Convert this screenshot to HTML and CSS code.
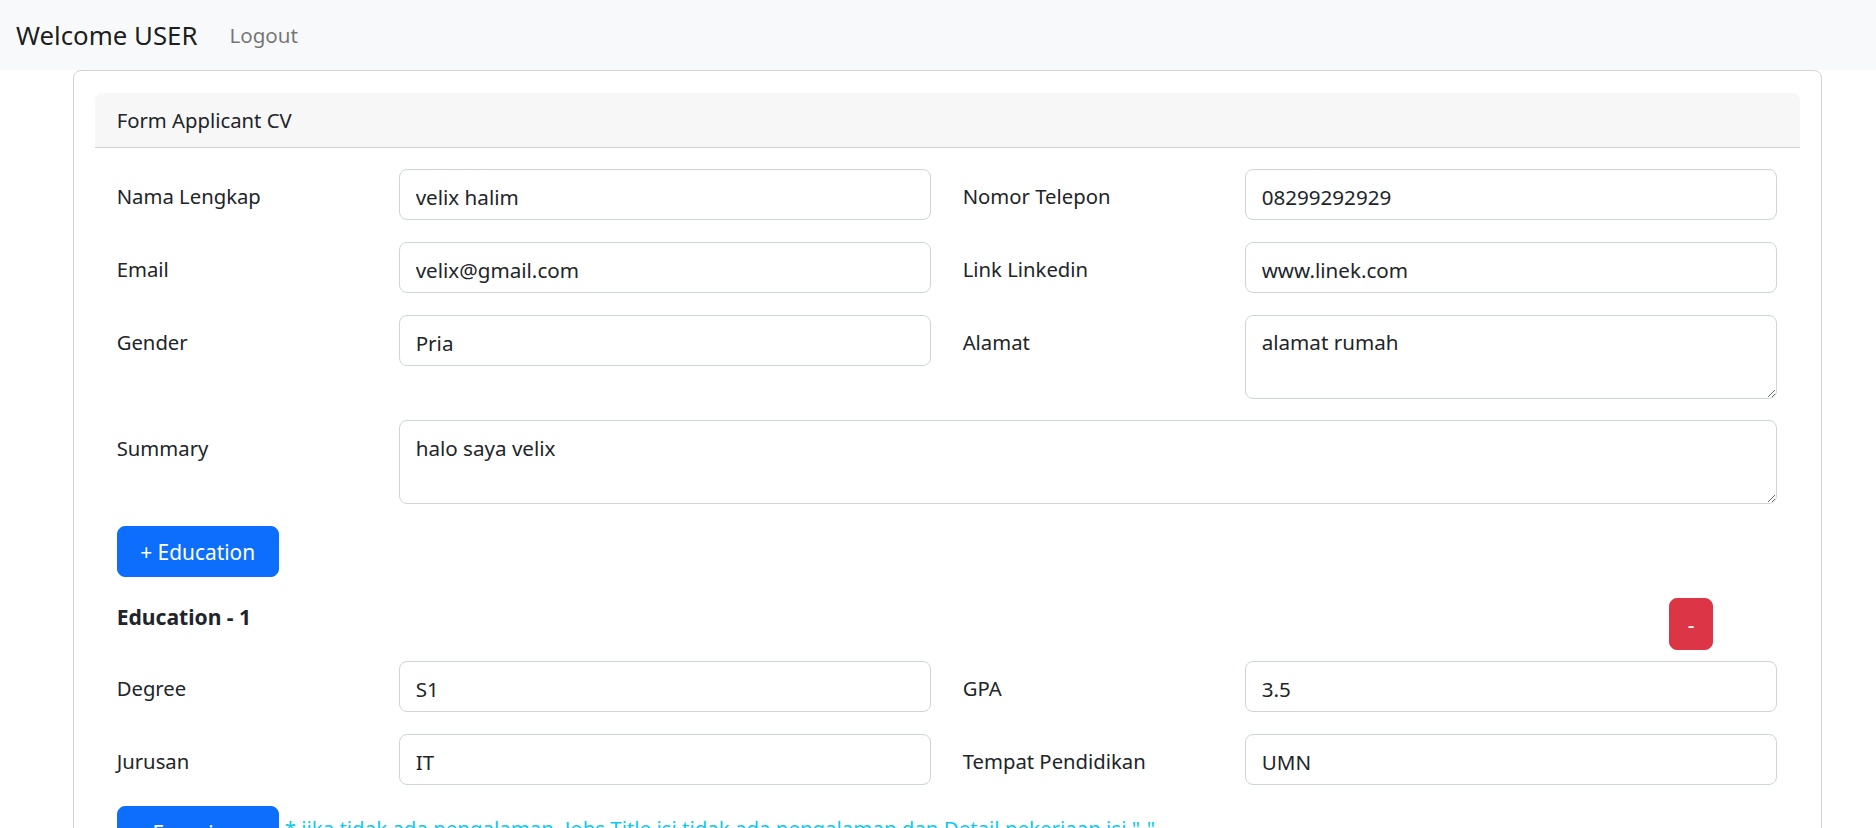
FILE: index.html
```html
<!DOCTYPE html>
<html lang="id">
<head>
<meta charset="utf-8">
<title>Form Applicant CV</title>
<link rel="stylesheet" href="styles.css">
</head>
<body>
<nav class="navbar">
  <span class="brand">Welcome USER</span>
  <a class="nav-link" href="#">Logout</a>
</nav>

<div class="card">
  <div class="card-header">Form Applicant CV</div>
  <form class="card-body">
    <div class="grid">
      <label class="label">Nama Lengkap</label>
      <input class="control" type="text" value="velix halim">
      <label class="label">Nomor Telepon</label>
      <input class="control" type="text" value="08299292929">

      <label class="label">Email</label>
      <input class="control" type="text" value="velix@gmail.com">
      <label class="label">Link Linkedin</label>
      <input class="control" type="text" value="www.linek.com">

      <label class="label">Gender</label>
      <input class="control" type="text" value="Pria">
      <label class="label">Alamat</label>
      <textarea class="control area">alamat rumah</textarea>

      <label class="label">Summary</label>
      <textarea class="control area wide">halo saya velix</textarea>
    </div>

    <div class="actions">
      <button type="button" class="btn btn-primary">+ Education</button>
    </div>

    <div class="section-head">
      <h6 class="section-title">Education - 1</h6>
      <div class="section-tools">
        <button type="button" class="btn btn-danger btn-remove">-</button>
      </div>
    </div>

    <div class="grid">
      <label class="label">Degree</label>
      <input class="control" type="text" value="S1">
      <label class="label">GPA</label>
      <input class="control" type="text" value="3.5">

      <label class="label">Jurusan</label>
      <input class="control" type="text" value="IT">
      <label class="label">Tempat Pendidikan</label>
      <input class="control" type="text" value="UMN">
    </div>

    <div class="actions exp">
      <button type="button" class="btn btn-primary">+ Experience</button>
      <span class="info">* jika tidak ada pengalaman, Jobs Title isi tidak ada pengalaman dan Detail pekerjaan isi "-"</span>
    </div>
  </form>
</div>
</body>
</html>
```

FILE: styles.css
```css
html {
  overflow: hidden;
}

body {
  margin: 0;
  background: #ffffff;
  color: #212529;
  font-family: "Noto Sans", "Open Sans", sans-serif;
  font-size: 20.3px;
  line-height: 32px;
}

.navbar {
  display: flex;
  align-items: center;
  height: 70px;
  padding: 0 16px;
  background: #f8f9fa;
}

.brand {
  font-size: 25.8px;
  line-height: 40px;
  color: rgba(0, 0, 0, 0.9);
  margin-right: 21.33px;
}

.nav-link {
  padding: 0 10.67px;
  color: rgba(0, 0, 0, 0.55);
  text-decoration: none;
  font-size: 20.6px;
}

.card {
  box-sizing: border-box;
  margin-left: 73px;
  width: 1749px;
  border: 1px solid #d2d2d2;
  border-radius: 8px;
  padding: 22.33px 21.33px 21.33px;
  min-height: 900px;
}

.card-header {
  background: #f7f7f7;
  border-bottom: 1px solid #d2d2d2;
  border-radius: 7px 7px 0 0;
  padding: 11px 21.33px 10.33px;
}

.card-body {
  display: block;
  padding: 21.33px;
}

.grid {
  display: grid;
  grid-template-columns: 250px 532px 250px 532px;
  column-gap: 32px;
  row-gap: 21.5px;
  align-items: start;
}

.label {
  padding-top: 11.5px;
  line-height: 32px;
}

.control {
  box-sizing: border-box;
  width: 100%;
  height: 51.33px;
  margin: 0;
  padding: 10.5px 16px 5.5px;
  border: 1px solid #ced4da;
  border-radius: 8px;
  background: #ffffff;
  color: #212529;
  font-family: inherit;
  font-size: 20.6px;
  line-height: 32px;
}

.area {
  height: 84px;
  resize: vertical;
  display: block;
}

.wide {
  grid-column: 2 / 5;
}

.actions {
  margin-top: 21.5px;
  display: flex;
  align-items: flex-start;
}

.btn {
  box-sizing: border-box;
  height: 51.33px;
  margin: 0;
  border: 1px solid transparent;
  border-radius: 8px;
  font-family: inherit;
  font-size: 20.9px;
  line-height: 32px;
  color: #ffffff;
  padding: 9px 0 7px;
  text-align: center;
}

.btn-primary {
  width: 162px;
  background: #0d6efd;
  border-color: #0d6efd;
}

.btn-danger {
  background: #dc3545;
  border-color: #dc3545;
}

.btn-remove {
  width: 43.5px;
}

.section-head {
  display: flex;
  align-items: flex-start;
  margin-top: 21.5px;
  margin-bottom: 11px;
}

.section-title {
  flex: 1;
  margin: 0;
  padding-top: 3px;
  font-size: 21.1px;
  line-height: 32px;
  font-weight: 700;
}

.section-tools {
  width: 109px;
}

.info {
  margin-left: 6px;
  color: #0dcaf0;
  font-size: 20.45px;
  line-height: 28px;
  padding-top: 8px;
}
```
